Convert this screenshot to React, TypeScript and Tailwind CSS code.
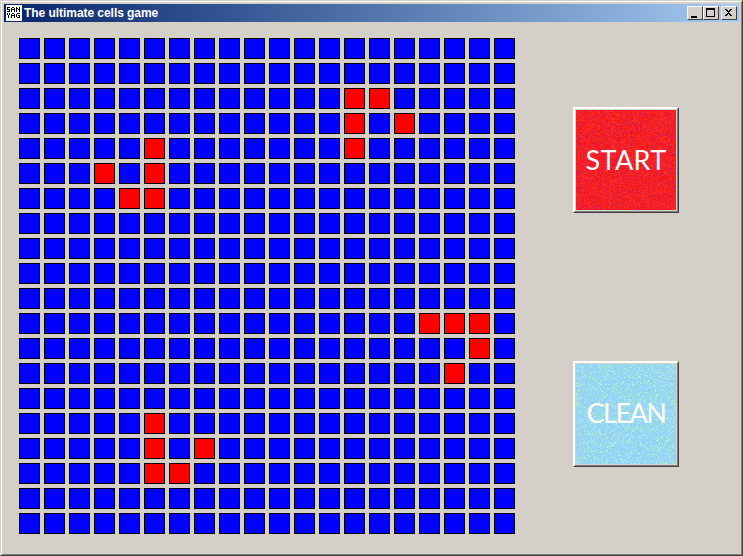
import React from "react";

const RED: Record<number, number[]> = {
  2: [13, 14], 3: [13, 15], 4: [5, 13], 5: [3, 5], 6: [4, 5],
  11: [16, 17, 18], 12: [18], 13: [17], 15: [5], 16: [5, 7], 17: [5, 6],
};

function Noise({ palette, density, seed }: { palette: string[]; density: number; seed: number }) {
  const rects: React.ReactNode[] = [];
  let s = seed;
  const rnd = () => {
    s = (s * 1664525 + 1013904223) >>> 0;
    return ((s >>> 8) & 0xffff) / 65536;
  };
  for (let y = 0; y < 100; y++) {
    for (let x = 0; x < 100; x++) {
      if (rnd() < density) {
        const c = palette[Math.floor(rnd() * palette.length)];
        rects.push(<rect key={`${x}-${y}`} x={x} y={y} width={1} height={1} fill={c} />);
      }
    }
  }
  return (
    <svg className="absolute inset-0 h-full w-full" viewBox="0 0 100 100" preserveAspectRatio="none" shapeRendering="crispEdges">
      {rects}
    </svg>
  );
}

function BigButton({ label, base, text, palette, density, seed }: { label: string; base: string; text: string; palette: string[]; density: number; seed: number }) {
  return (
    <div className="h-[106px] w-[106px] border border-t-white border-l-white border-r-[#404040] border-b-[#404040]">
      <div className="h-full w-full border border-t-white border-l-white border-r-[#808080] border-b-[#808080] bg-[#d4d0c8] p-px">
        <div className={`relative flex h-full w-full items-center justify-center overflow-hidden ${base}`}>
          <Noise palette={palette} density={density} seed={seed} />
          <span className={`relative font-['Lato',sans-serif] text-[27px] leading-none text-white ${text}`}>{label}</span>
        </div>
      </div>
    </div>
  );
}

function CaptionButton({ children, className = "" }: { children: React.ReactNode; className?: string }) {
  return (
    <div className={`h-[14px] w-[16px] border border-t-white border-l-white border-r-[#404040] border-b-[#404040] bg-[#d4d0c8] ${className}`}>
      <svg width="14" height="12" viewBox="0 0 14 12" shapeRendering="crispEdges">{children}</svg>
    </div>
  );
}

function AppIcon() {
  const rows = [
    ".###..##..#..#..",
    ".#...#..#.##.#..",
    ".###.####.#.##..",
    "...#.#..#.#..#..",
    ".###.#..#.#..#..",
    "................",
    ".#.#..##...###..",
    ".#.#.#..#.#.....",
    "..#..####.#.##..",
    "..#..#..#.#..#..",
    "..#..#..#..###..",
  ];
  return (
    <svg width="16" height="16" viewBox="0 0 16 16" shapeRendering="crispEdges" className="ml-[2px] shrink-0">
      <rect width="16" height="16" fill="#fff" />
      {rows.map((r, y) =>
        r.split("").map((c, x) =>
          c === "#" ? <rect key={`${x}-${y}`} x={x} y={y + 2} width="1" height="1" fill="#000" /> : null
        )
      )}
    </svg>
  );
}

export default function App() {
  return (
    <div className="h-[556px] w-[743px] border border-t-[#d4d0c8] border-l-[#d4d0c8] border-r-[#404040] border-b-[#404040]">
      <div className="flex h-full w-full flex-col border border-t-white border-l-white border-r-[#808080] border-b-[#808080] bg-[#d4d0c8] p-[2px]">
        <div className="flex h-[18px] items-center bg-gradient-to-r from-[#0a246a] to-[#a6caf0]">
          <AppIcon />
          <span className="ml-[2px] font-['Liberation_Sans',sans-serif] text-[12px] font-bold leading-none tracking-[-0.05px] text-white">The ultimate cells game</span>
          <div className="ml-auto mr-[2px] flex">
            <CaptionButton><rect x="3" y="9" width="6" height="2" fill="#000" /></CaptionButton>
            <CaptionButton className="mr-[2px]"><path d="M2 1h9v9H2zM3 3v6h7V3z" fill="#000" fillRule="evenodd" /></CaptionButton>
            <CaptionButton><path d="M3 2h2v1h1v1h1V3h1V2h2v1H9v1H8v1H7v1h1v1h1v1h1v1H8V8H7V7H6v1H5v1H3V8h1V7h1V6h1V5H5V4H4V3H3z" fill="#000" /></CaptionButton>
          </div>
        </div>
        <div className="flex pl-[15px] pt-[16px]">
          <div className="grid grid-cols-[repeat(20,21px)] grid-rows-[repeat(20,21px)] gap-[4px]">
            {Array.from({ length: 400 }, (_, i) => {
              const row = Math.floor(i / 20);
              const col = i % 20;
              const on = RED[row]?.includes(col);
              return <div key={i} className={`border border-black ${on ? "bg-[#ff0000]" : "bg-[#0000ff]"}`} />;
            })}
          </div>
          <div className="ml-[58px] mt-[69px] flex flex-col gap-[148px]">
            <BigButton label="START" base="bg-[#f52428] pb-[2px]" text="tracking-[0.4px]" palette={["#ff1414", "#e02040", "#ff3020", "#e81434"]} density={0.6} seed={7} />
            <BigButton label="CLEAN" base="bg-[#98d6f2] pb-[4px]" text="tracking-[-1.5px]" palette={["#a8f8d8", "#b4f4d0", "#8cc8f4"]} density={0.16} seed={31} />
          </div>
        </div>
      </div>
    </div>
  );
}
